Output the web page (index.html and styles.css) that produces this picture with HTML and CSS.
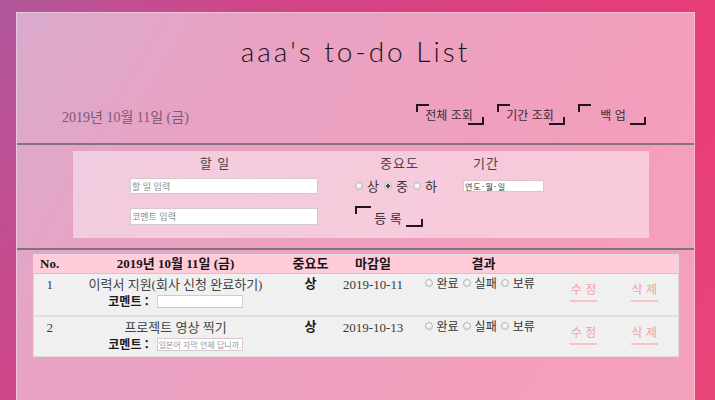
FILE: index.html
```html
<!DOCTYPE html>
<html lang="ko">
<head>
<meta charset="utf-8">
<title>aaa's to-do List</title>
<link rel="stylesheet" href="styles.css">
</head>
<body>
<div class="frame">
  <div class="panel">
    <header class="top">
      <h1 class="title">aaa's to-do List</h1>
      <div class="bar">
        <span class="today">2019년 10월 11일 (금)</span>
        <nav class="menu">
          <a class="btn">전체 조회</a>
          <a class="btn">기간 조회</a>
          <a class="btn btn-wide">백 업</a>
        </nav>
      </div>
    </header>

    <section class="form-wrap">
      <form class="form">
        <div class="f-head f-todo">할 일</div>
        <div class="f-head f-imp">중요도</div>
        <div class="f-head f-date">기간</div>

        <input class="txt txt-todo" type="text" placeholder="할 일 입력">
        <div class="radios f-radios">
          <label><input type="radio" name="imp"> 상</label>
          <label><input type="radio" name="imp" checked> 중</label>
          <label><input type="radio" name="imp"> 하</label>
        </div>
        <input class="txt txt-date" type="text" placeholder="연도-월-일">

        <input class="txt txt-comment" type="text" placeholder="코멘트 입력">
        <a class="btn btn-reg">등 록</a>
      </form>
    </section>

    <section class="list">
      <table class="todo">
        <colgroup>
          <col class="c-no"><col class="c-title"><col class="c-imp"><col class="c-due"><col class="c-res"><col class="c-edit"><col class="c-del">
        </colgroup>
        <thead>
          <tr>
            <th>No.</th>
            <th>2019년 10월 11일 (금)</th>
            <th>중요도</th>
            <th>마감일</th>
            <th>결과</th>
            <th></th>
            <th></th>
          </tr>
        </thead>
        <tbody>
          <tr>
            <td class="no">1</td>
            <td class="task">
              <div class="task-name">이력서 지원(회사 신청 완료하기)</div>
              <div class="comment"><b>코멘트 :</b> <input class="txt txt-c" type="text"></div>
            </td>
            <td class="imp">상</td>
            <td class="due">2019-10-11</td>
            <td class="res">
              <div class="radios small">
                <label><input type="radio" name="r1"> 완료</label>
                <label><input type="radio" name="r1"> 실패</label>
                <label><input type="radio" name="r1"> 보류</label>
              </div>
            </td>
            <td class="act"><a class="link">수 정</a></td>
            <td class="act"><a class="link">삭 제</a></td>
          </tr>
          <tr>
            <td class="no">2</td>
            <td class="task">
              <div class="task-name">프로젝트 영상 찍기</div>
              <div class="comment"><b>코멘트 :</b> <input class="txt txt-c" type="text" placeholder="일본어 자막 언제 답니까..."></div>
            </td>
            <td class="imp">상</td>
            <td class="due">2019-10-13</td>
            <td class="res">
              <div class="radios small">
                <label><input type="radio" name="r2"> 완료</label>
                <label><input type="radio" name="r2"> 실패</label>
                <label><input type="radio" name="r2"> 보류</label>
              </div>
            </td>
            <td class="act"><a class="link">수 정</a></td>
            <td class="act"><a class="link">삭 제</a></td>
          </tr>
        </tbody>
      </table>
    </section>
  </div>
</div>
</body>
</html>
```

FILE: styles.css
```css
* { box-sizing: border-box; }

html, body {
  margin: 0;
  padding: 0;
  height: 100%;
}

body {
  font-family: "Liberation Serif", "Noto Sans CJK KR", serif;
  color: #333;
  background: linear-gradient(120deg, #b0589c 0%, #d04688 26%, #e83c78 76%, #e8467a 100%);
  overflow: hidden;
}

.frame {
  padding: 12px 20px 0 16px;
  height: 100%;
}

.panel {
  min-height: 420px;
  background: rgba(255, 255, 255, 0.5);
  border: 1px solid rgba(255, 255, 255, 0.35);
}

/* ---------- header ---------- */
.top {
  border-bottom: 2px solid #86707e;
}

.title {
  margin: 0;
  padding-top: 23px;
  height: 55px;
  text-align: center;
  font-family: "Lato", "Noto Sans", sans-serif;
  font-weight: 300;
  font-size: 28px;
  line-height: 30px;
  letter-spacing: 3px;
  color: #1a1418;
}

.bar {
  display: flex;
  align-items: center;
  justify-content: space-between;
  padding: 35px 48px 17px 45px;
}

.today {
  font-size: 14px;
  color: #7a5a6e;
  padding-top: 3px;
}

.menu {
  display: flex;
  gap: 13px;
}

.btn {
  position: relative;
  display: inline-flex;
  align-items: center;
  justify-content: center;
  width: 68px;
  height: 21px;
  font-family: "Noto Sans CJK KR", sans-serif;
  font-size: 12px;
  color: #3a2a35;
  padding-right: 2px;
}

.btn::before,
.btn::after {
  content: "";
  position: absolute;
  width: 11px;
  height: 6px;
  border-color: #1e161c;
  border-style: solid;
  border-width: 0;
}

.btn::before {
  left: 0;
  top: 0;
  border-top-width: 2px;
  border-left-width: 2px;
}

.btn::after {
  right: 0;
  bottom: 0;
  width: 14px;
  border-bottom-width: 2px;
  border-right-width: 2px;
}

.btn-wide { padding-left: 4px; }

/* ---------- form ---------- */
.form-wrap {
  padding: 6px 45px 10px 56px;
  border-bottom: 2px solid #86707e;
}

.form {
  display: grid;
  grid-template-columns: 282px 108px 1fr;
  grid-template-rows: 23px 28px 21px;
  padding: 4px 0 11px;
  background: rgba(255, 255, 255, 0.45);
}

.f-head {
  font-family: "Noto Sans CJK KR", sans-serif;
  font-size: 13px;
  line-height: 16px;
  letter-spacing: 1px;
  color: #4a3f46;
  align-self: start;
}

.f-todo { text-align: center; padding-left: 2px; }
.f-imp { padding-left: 25px; }
.f-date { padding-left: 10px; }

.txt {
  border: 1px solid #d8c8ce;
  background: #fff;
  padding: 0 1px;
  font-family: "Noto Sans CJK KR", sans-serif;
  font-size: 9px;
  color: #333;
  outline: none;
}

.txt::placeholder { color: #8a8a8a; }

.txt-todo {
  align-self: start;
  margin-left: 57px;
  width: 188px;
  height: 16px;
}

.txt-comment {
  align-self: center;
  margin-left: 57px;
  width: 188px;
  height: 17px;
}

.txt-date {
  align-self: start;
  margin-top: 2px;
  width: 81px;
  height: 12px;
  font-size: 8px;
  letter-spacing: 1px;
}

.txt-date::placeholder { color: #333; }

.f-radios {
  align-self: start;
  gap: 6px;
}

.radios {
  display: flex;
  align-items: center;
  gap: 5px;
  font-family: "Noto Sans CJK KR", sans-serif;
  font-size: 13px;
  line-height: 16px;
  color: #3a3036;
}

.radios label {
  display: inline-flex;
  align-items: center;
  gap: 4px;
}

.radios input {
  -webkit-appearance: none;
  appearance: none;
  margin: 0;
  width: 8px;
  height: 8px;
  border-radius: 50%;
  border: 1px solid #b8b8b8;
  background: radial-gradient(circle at 50% 40%, #fdfdfd, #dcdcdc);
  position: relative;
}

.radios input:checked {
  background: radial-gradient(circle, #4a4a4a 0 1.6px, #f2f2f2 2px, #d8d8d8);
}

.btn-reg {
  font-size: 13px;
  letter-spacing: 0;
  padding-left: 0;
  padding-top: 2px;
}

.btn-reg::before { width: 14px; }
.btn-reg::after { width: 15px; }

/* ---------- list ---------- */
.list {
  padding: 4px 16px 0 16px;
}

.todo {
  width: 645px;
  border-collapse: collapse;
  table-layout: fixed;
  border: 1px solid #e2dadd;
  background: #f0f0f0;
}

.c-no { width: 32px; }
.c-title { width: 220px; }
.c-imp { width: 50px; }
.c-due { width: 75px; }
.c-res { width: 146px; }
.c-edit { width: 54px; }
.c-del { width: 68px; }

.todo th {
  background: #ffcdd9;
  height: 19px;
  padding: 0;
  font-size: 13px;
  line-height: 16px;
  font-weight: bold;
  color: #1a1418;
  border-bottom: 1px solid #d8c0c6;
}

.todo th:first-child { text-align: left; padding-left: 6px; }

.todo td {
  vertical-align: top;
  padding: 3px 0 0;
  height: 42px;
  font-size: 13px;
  line-height: 16px;
  text-align: center;
  color: #3a3a3a;
  border-bottom: 2px solid #e0e0e0;
}

.todo tr:last-child td { border-bottom: 0; height: 41px; }

.task-name { color: #444; }

.comment {
  display: flex;
  align-items: center;
  justify-content: center;
  gap: 8px;
  height: 16px;
}

.comment b {
  font-family: "Noto Sans CJK KR", sans-serif;
  font-weight: bold;
  font-size: 12px;
  color: #1a1a1a;
}

.txt-c {
  width: 86px;
  height: 13px;
  margin-top: 1px;
  font-size: 8px;
  color: #999;
}

.txt-c::placeholder { color: #9a9a9a; }

.todo td.imp {
  font-family: "Noto Sans CJK KR", sans-serif;
  font-weight: bold;
  color: #1a1a1a;
  padding-top: 1px;
}

.todo td.res { padding-left: 14px; padding-top: 1px; }

.radios.small {
  gap: 4px;
  font-size: 12px;
  color: #333;
}

.link {
  display: inline-block;
  margin-top: 4px;
  padding: 0 1px 3px;
  border-bottom: 2px solid #f9c2c0;
  font-family: "Noto Sans CJK KR", sans-serif;
  font-size: 12px;
  line-height: 16px;
  letter-spacing: 0;
  color: #f4a0a4;
}
```
